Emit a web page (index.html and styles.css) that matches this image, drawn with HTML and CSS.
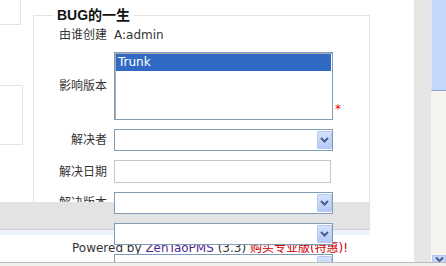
FILE: index.html
```html
<!DOCTYPE html>
<html>
<head>
<meta charset="utf-8">
<link rel="stylesheet" href="styles.css">
</head>
<body>
<div class="window">
  <div class="screen">
    <div class="viewport">
      <aside class="side">
        <div class="box box-a"></div>
        <div class="box box-b"></div>
      </aside>
      <fieldset class="life">
        <legend>BUG的一生</legend>
        <div class="form">
          <span class="label">由谁创建</span>
          <span class="value">A:admin</span>

          <span class="label">影响版本</span>
          <div class="multi">
            <div class="listbox"><div class="option selected">Trunk</div></div>
            <span class="required">*</span>
          </div>

          <span class="label">解决者</span>
          <div class="select"><span class="drop"><svg width="9" height="6" viewBox="0 0 9 6"><polyline points="1,1 4.5,4.5 8,1" fill="none" stroke="#4a5f88" stroke-width="2"/></svg></span></div>

          <span class="label">解决日期</span>
          <div class="input"></div>

          <span class="label">解决版本</span>
          <div class="select"><span class="drop"><svg width="9" height="6" viewBox="0 0 9 6"><polyline points="1,1 4.5,4.5 8,1" fill="none" stroke="#4a5f88" stroke-width="2"/></svg></span></div>

          <span class="label"></span>
          <div class="select"><span class="drop"><svg width="9" height="6" viewBox="0 0 9 6"><polyline points="1,1 4.5,4.5 8,1" fill="none" stroke="#4a5f88" stroke-width="2"/></svg></span></div>

          <span class="label"></span>
          <div class="select"><span class="drop"><svg width="9" height="6" viewBox="0 0 9 6"><polyline points="1,1 4.5,4.5 8,1" fill="none" stroke="#4a5f88" stroke-width="2"/></svg></span></div>
        </div>
      </fieldset>
      <footer class="foot">
        <div class="band"></div>
        <div class="rim"></div>
        <p class="credit">Powered by <a class="brand">ZenTaoPMS</a> (3.3) <a class="buy">购买专业版(特惠)!</a></p>
      </footer>
    </div>
    <div class="gutter"></div>
    <div class="vscroll">
      <div class="thumb"></div>
      <div class="track"></div>
      <div class="arrow"><svg width="9" height="5" viewBox="0 0 9 5"><polyline points="1,0.5 4.5,4 8,0.5" fill="none" stroke="#4a5f88" stroke-width="2"/></svg></div>
    </div>
  </div>
  <div class="status"></div>
</div>
</body>
</html>
```

FILE: styles.css
```css
html, body {
  margin: 0;
  padding: 0;
}

body {
  width: 446px;
  height: 266px;
  overflow: hidden;
  background: #fff;
  font: 12px/14px "DejaVu Sans", "Noto Sans CJK SC", sans-serif;
  color: #222;
}

.window {
  display: flex;
  flex-direction: column;
  height: 266px;
}

.screen {
  display: flex;
  height: 262px;
  flex: none;
}

.viewport {
  position: relative;
  display: flex;
  align-items: flex-start;
  width: 414px;
  flex: none;
  overflow: hidden;
  background: #fff;
}

.side {
  width: 33px;
  flex: none;
}

.box {
  border: 1px solid #e2e2e2;
  border-left: none;
}

.box-a {
  width: 20px;
  height: 24px;
  border-top: none;
}

.box-b {
  width: 22px;
  height: 58px;
  margin-top: 60px;
}

.life {
  flex: none;
  width: 337px;
  box-sizing: border-box;
  min-width: 0;
  margin: 5px 0 0;
  padding: 0 0 40px;
  border: 1px solid #e2e2e2;
}

.life legend {
  margin-left: 19px;
  padding: 0 4px;
  font: bold 14px/20px "Liberation Sans", "Noto Sans CJK SC", sans-serif;
  color: #111;
}

.form {
  display: grid;
  grid-template-columns: 73px 219px;
  grid-template-rows: 17px 68px 22px 23px 22px 22px 22px;
  column-gap: 7px;
  row-gap: 9px;
  padding-top: 1px;
}

.label {
  text-align: right;
  align-self: center;
  color: #333;
}

.value {
  align-self: center;
  color: #333;
}

.multi {
  display: flex;
  align-items: flex-end;
}

.listbox {
  flex: none;
  width: 219px;
  height: 68px;
  box-sizing: border-box;
  border: 1px solid #7f9db9;
  box-shadow: inset 1px 1px 0 #a9a9a9;
  padding: 1px;
  background: #fff;
  position: relative;
  z-index: 2;
}

.option {
  height: 17px;
  line-height: 17px;
  padding-left: 2px;
}

.option.selected {
  background: #316ac5;
  color: #fff;
}

.required {
  flex: none;
  margin: 0 0 4px 2px;
  color: #e00;
}

.select {
  box-sizing: border-box;
  border: 1px solid #7f9db9;
  background: #fff;
  display: flex;
  justify-content: flex-end;
  align-items: center;
  position: relative;
  z-index: 2;
}

.drop {
  width: 15px;
  height: 18px;
  box-sizing: border-box;
  border: 1px solid #b7c9f2;
  border-radius: 1px;
  background: linear-gradient(#d6e2fd, #b5c9f7);
  display: flex;
  align-items: center;
  justify-content: center;
}

.input {
  width: 217px;
  box-sizing: border-box;
  border: 1px solid #c6c6c6;
  background: #fff;
  position: relative;
  z-index: 2;
}

.foot {
  position: absolute;
  left: 0;
  top: 202px;
  bottom: 0;
  width: 370px;
  z-index: 1;
  background: #fff;
}

.band {
  height: 27px;
  background: #e3e3e3;
  border-bottom: 1px solid #d3d3d3;
}

.rim {
  height: 5px;
  background: #edf2fb;
}

.credit {
  margin: 6px 0 0;
  padding-left: 72px;
  white-space: nowrap;
  color: #333;
}

.brand {
  color: #4e2a8e;
}

.buy {
  color: #d00000;
}

.gutter {
  width: 17px;
  flex: none;
  background: #e6e6e6;
}

.vscroll {
  width: 15px;
  flex: none;
  display: flex;
  flex-direction: column;
}

.thumb {
  height: 91px;
  box-sizing: border-box;
  background: #c3d6fc;
  border-left: 1px solid #dce6fd;
  border-bottom: 1px solid #8aa3d6;
}

.track {
  flex: 1;
  background: #f4f3ee;
}

.arrow {
  height: 7px;
  margin-left: 1px;
  box-sizing: border-box;
  border: 1px solid #b3c6f1;
  border-bottom: none;
  background: #c3d5fb;
  display: flex;
  justify-content: center;
  align-items: flex-end;
  overflow: hidden;
}

.status {
  flex: 1;
  border-top: 1px solid #bdbdbd;
  background: #f0efe9;
}
```
